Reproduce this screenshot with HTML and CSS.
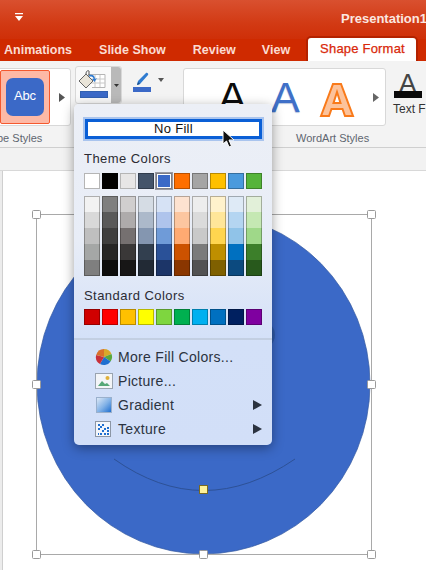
FILE: index.html
```html
<!DOCTYPE html>
<html lang="en">
<head>
<meta charset="utf-8">
<title>Shape Format - Fill menu</title>
<link rel="stylesheet" href="styles.css">
</head>
<body>
<div class="app">
  <header class="titlebar">
    <svg class="qat" width="10" height="9" viewBox="0 0 10 9"><path d="M1 0h8v1.200H1zM1 3h8L5 8z" fill="#fff"/></svg>
    <span class="doc-title">Presentation1</span>
  </header>
  <nav class="tabs">
    <span class="tab">Animations</span>
    <span class="tab">Slide Show</span>
    <span class="tab">Review</span>
    <span class="tab">View</span>
    <span class="tab tab-active">Shape Format</span>
  </nav>
  <section class="ribbon">
    <div class="gallery gallery-shapes">
      <div class="shape-thumb"><span class="abc">Abc</span></div>
      <svg class="more" width="6" height="9" viewBox="0 0 6 9"><path d="M0 0l6 4.500-6 4.500z" fill="#555"/></svg>
    </div>
    <div class="fill-btn">
      <div class="fill-main">
        <svg width="28" height="20" viewBox="0 0 28 20">
          <path d="M10 4.500h17v13H14" fill="#fff" stroke="#b5b5b5"/>
          <path d="M13 9h14M13 13h14M17 5v12M22 5v12" stroke="#c8c8c8" fill="none"/>
          <path d="M1 11l7-7 7 7-7 7z" fill="#e9e4d8" stroke="#666"/>
          <path d="M8 4c0-3 2-4 3-3v5" fill="none" stroke="#555"/>
          <path d="M11 5c3-1 6 0 6 4l2-1-2.500 4-2.500-3 1.500 0c0-2-2-3-4-2z" fill="#2f7bd0"/>
        </svg>
        <span class="fill-bar"></span>
      </div>
      <div class="fill-arrow"><svg width="5" height="3" viewBox="0 0 5 3"><path d="M0 0h5L2.500 3z" fill="#333"/></svg></div>
    </div>
    <div class="pen-btn">
      <svg class="pen" width="18" height="14" viewBox="0 0 18 14"><path d="M2 13l1-4 8-8c1-1 3 1 2 2L5 12z" fill="#2f7bd0"/><path d="M2 13l1-3 2 2z" fill="#1b4f8c"/></svg>
      <svg class="pen-caret" width="6" height="4" viewBox="0 0 6 4"><path d="M0 0h6L3 4z" fill="#555"/></svg>
      <span class="pen-bar"></span>
    </div>
    <div class="gallery gallery-wordart">
      <span class="wa wa-black">A</span>
      <span class="wa wa-blue">A</span>
      <svg class="wa-orange" width="36" height="36" viewBox="0 0 36 36"><path d="M14 2h8l12 32h-8l-2.500-7h-11L10 34H2z" fill="#fcc29a" stroke="#f97a1a" stroke-width="2"/><path d="M18 10l-3.500 11h7z" fill="#fff" stroke="#f97a1a" stroke-width="2"/></svg>
      <svg class="more more-wa" width="6" height="9" viewBox="0 0 6 9"><path d="M0 0l6 4.500-6 4.500z" fill="#666"/></svg>
    </div>
    <div class="text-fill">
      <span class="tf-a">A</span>
      <span class="tf-bar"></span>
      <span class="tf-label">Text Fill</span>
    </div>
    <span class="group-label label-shapes">pe Styles</span>
    <span class="group-label label-wordart">WordArt Styles</span>
  </section>
  <div class="strip"></div>
  <main class="stage">
    <div class="slide"></div>
    <svg class="canvas" width="426" height="399" viewBox="0 171 426 399">
      <ellipse cx="203.500" cy="384" rx="166.500" ry="170" fill="#3b69c7" stroke="#34599f" stroke-width="0.700"/>
      <circle cx="261" cy="335" r="14" fill="#2f5aa8"/>
      <path d="M114 459Q203 522 295 459" fill="none" stroke="#2d5196" stroke-width="1"/>
      <rect class="box" x="36.500" y="214.500" width="335" height="340"/>
      <rect class="h" x="32.500" y="210.500" width="8" height="8"/>
      <rect class="h" x="199.500" y="210.500" width="8" height="8"/>
      <rect class="h" x="367.500" y="210.500" width="8" height="8"/>
      <rect class="h" x="32.500" y="380.500" width="8" height="8"/>
      <rect class="h" x="367.500" y="380.500" width="8" height="8"/>
      <rect class="h" x="32.500" y="550.500" width="8" height="8"/>
      <rect class="h" x="199.500" y="550.500" width="8" height="8"/>
      <rect class="h" x="367.500" y="550.500" width="8" height="8"/>
      <rect class="h-y" x="199.500" y="485.500" width="8" height="8"/>
    </svg>
  </main>

  <div class="menu">
    <div class="no-fill">No Fill</div>
    <div class="menu-head">Theme Colors</div>
    <div class="row theme">
      <span class="sw"></span><span class="sw"></span><span class="sw"></span><span class="sw"></span><span class="sw sw-on"></span><span class="sw"></span><span class="sw"></span><span class="sw"></span><span class="sw"></span><span class="sw"></span>
    </div>
    <div class="row shades">
      <div class="col"><i></i><i></i><i></i><i></i><i></i></div>
      <div class="col"><i></i><i></i><i></i><i></i><i></i></div>
      <div class="col"><i></i><i></i><i></i><i></i><i></i></div>
      <div class="col"><i></i><i></i><i></i><i></i><i></i></div>
      <div class="col"><i></i><i></i><i></i><i></i><i></i></div>
      <div class="col"><i></i><i></i><i></i><i></i><i></i></div>
      <div class="col"><i></i><i></i><i></i><i></i><i></i></div>
      <div class="col"><i></i><i></i><i></i><i></i><i></i></div>
      <div class="col"><i></i><i></i><i></i><i></i><i></i></div>
      <div class="col"><i></i><i></i><i></i><i></i><i></i></div>
    </div>
    <div class="menu-head head-std">Standard Colors</div>
    <div class="row standard">
      <span class="sw"></span><span class="sw"></span><span class="sw"></span><span class="sw"></span><span class="sw"></span><span class="sw"></span><span class="sw"></span><span class="sw"></span><span class="sw"></span><span class="sw"></span>
    </div>
    <div class="divider"></div>
    <div class="item">
      <svg class="ico" width="18" height="18" viewBox="0 0 18 18">
        <path d="M9 9V1a8 8 0 0 1 7.500 5z" fill="#d8a82a"/>
        <path d="M9 9l7.500-3a8 8 0 0 1-.9 7.500z" fill="#5aa83c"/>
        <path d="M9 9l6.600 4.500A8 8 0 0 1 5 16z" fill="#1f6fd0"/>
        <path d="M9 9l-4 7A8 8 0 0 1 1.200 7z" fill="#c8303a"/>
        <path d="M9 9L1.200 7A8 8 0 0 1 9 1z" fill="#d8702a"/>
      </svg>
      <span>More Fill Colors...</span>
    </div>
    <div class="item">
      <svg class="ico" width="18" height="16" viewBox="0 0 18 16">
        <rect x=".5" y=".5" width="17" height="15" fill="#f3f5f8" stroke="#9aa4b0"/>
        <circle cx="12.500" cy="5" r="2" fill="#e0b03a"/>
        <path d="M3 13l4-5 3 3 2-1 3 3z" fill="#56a878"/>
      </svg>
      <span>Picture...</span>
    </div>
    <div class="item">
      <span class="ico grad"></span>
      <span>Gradient</span>
      <svg class="sub" width="9" height="10" viewBox="0 0 9 10"><path d="M0 0l9 5-9 5z" fill="#2b3340"/></svg>
    </div>
    <div class="item">
      <svg class="ico" width="16" height="16" viewBox="0 0 16 16">
        <rect x=".5" y=".5" width="15" height="15" fill="#f3f6fb" stroke="#8c96a5"/>
        <path d="M3 3h2v2H3zM7 3h2v2H7zM5 5h2v2H5zM3 7h2v2H3zM9 7h2v2H9zM12 6h2v2h-2zM7 9h2v2H7zM12 9h2v2h-2zM9 12h2v2H9zM5 12h2v2H5zM12 12h2v2h-2zM3 12h1v2H3z" fill="#1f6fd0"/>
      </svg>
      <span>Texture</span>
      <svg class="sub" width="9" height="10" viewBox="0 0 9 10"><path d="M0 0l9 5-9 5z" fill="#2b3340"/></svg>
    </div>
  </div>

  <svg class="cursor" width="14" height="20" viewBox="0 0 14 20"><path d="M1 1v14l3.500-3 2.500 6 2.500-1-2.500-6h5z" fill="#111" stroke="#fff" stroke-width="1"/></svg>
</div>
</body>
</html>
```
FILE: styles.css
```css
* { box-sizing: border-box; }
html, body { margin: 0; padding: 0; }
body { width: 426px; height: 570px; overflow: hidden; font-family: "Liberation Sans", Arial, sans-serif; background: #fff; }
.app { position: relative; width: 426px; height: 570px; overflow: hidden; display: flex; flex-direction: column; }

.titlebar { height: 39px; flex: none; display: flex; align-items: center; justify-content: space-between; padding: 0 0 3px 14px; background: linear-gradient(#d9502f, #d23a14 60%, #cf2f08); }
.qat { display: block; margin-bottom: 1px; }
.doc-title { font-size: 13px; font-weight: 700; color: #fbe7e0; white-space: nowrap; width: 85px; }

.tabs { height: 22px; flex: none; display: flex; align-items: flex-end; background: #cf2a00; padding-left: 4px; font-size: 12.5px; font-weight: 700; color: #fbdcd2; }
.tab { height: 22px; line-height: 22px; margin-right: 27px; white-space: nowrap; }
.tab:nth-child(3) { margin-right: 26px; }
.tab-active { height: 23px; margin: 0 0 0 -9px; padding: 0 0 0 12px; width: 108px; background: #fff; color: #d9280a; border-radius: 3px 3px 0 0; box-shadow: 0 0 0 2px #b32200; clip-path: inset(-2px -2px 0 -2px); font-size: 13px; font-weight: 400; letter-spacing: .2px; -webkit-text-stroke: .25px #d9280a; }

.ribbon { position: relative; height: 87px; flex: none; display: flex; align-items: flex-start; padding-top: 6px; background: #f3f3f3; border-bottom: 1px solid #cfcfcf; }
.ribbon > * { flex: none; }
.gallery { background: #fff; border: 1px solid #d8d8d8; border-radius: 3px; height: 58px; display: flex; align-items: center; }
.gallery-shapes { width: 77px; margin-left: -6px; padding-left: 5px; margin-top: 1px; }
.shape-thumb { width: 50px; height: 54px; background: #fdb9a6; border: 1px solid #f4592f; border-radius: 2px; display: flex; align-items: center; justify-content: center; }
.abc { width: 38px; height: 38px; background: #3b69c7; border-radius: 7px; color: #fff; font-size: 13px; line-height: 36px; text-align: center; letter-spacing: -.2px; }
.more { margin-left: 9px; }

.fill-btn { width: 47px; height: 38px; margin: -1px 0 0 4px; display: flex; border: 1px solid #d8d8d8; border-radius: 3px; background: #f9f9f9; }
.fill-main { flex: 1; display: flex; flex-direction: column; align-items: center; padding-top: 3px; }
.fill-main svg { margin-left: -3px; }
.fill-bar { width: 28px; height: 7px; background: #3b69c7; margin-top: 1px; border: 1px solid #3160b0; }
.fill-arrow { width: 10px; background: #b9b9b9; display: flex; align-items: center; justify-content: center; border-radius: 0 3px 3px 0; }

.pen-btn { position: relative; width: 40px; height: 40px; margin: 2px 0 0 11px; }
.pen { position: absolute; left: 2px; top: 3px; }
.pen-caret { position: absolute; left: 25px; top: 9px; }
.pen-bar { position: absolute; left: 0; top: 18px; width: 18px; height: 5px; background: #3b69c7; }
.pen-btn::after { content: ""; position: absolute; left: 4px; top: 35px; width: 12px; height: 2px; background: #b5b5b5; }

.gallery-wordart { position: relative; width: 203px; margin: 1px 0 0 10px; overflow: hidden; }
.wa { position: absolute; top: -3px; font-size: 43px; line-height: 62px; }
.wa-black { left: 34px; color: #0c0c0c; }
.wa-blue { left: 87px; color: #3f70c8; text-shadow: 0 1px 1px #b8c6de; }
.wa-orange { position: absolute; left: 135px; top: 13px; }
.more-wa { position: absolute; left: 189px; top: 24px; margin: 0; }

.text-fill { position: relative; width: 40px; height: 56px; margin-left: 7px; }
.tf-a { position: absolute; left: 6px; top: 1px; font-size: 26px; line-height: 30px; color: #444; }
.tf-bar { position: absolute; left: 1px; top: 24px; width: 28px; height: 7px; background: #0a0a0a; }
.tf-label { position: absolute; left: 0; top: 35px; font-size: 12px; line-height: 14px; color: #333; white-space: nowrap; }

.group-label { position: absolute; top: 71px; font-size: 11px; line-height: 13px; color: #5f6670; white-space: nowrap; }
.label-shapes { left: -3px; }
.label-wordart { left: 296px; }

.strip { height: 23px; flex: none; background: #f2f2f2; border-bottom: 1px solid #d8d8d8; }

.stage { position: relative; flex: 1; background: #ececec; padding-left: 2px; }
.slide { height: 100%; background: #fff; border-left: 1px solid #cfcfcf; }
.canvas { position: absolute; left: 0; top: 0; }
.box { fill: none; stroke: #a9a9a9; stroke-width: 1; }
.h { fill: #fff; stroke: #9a9a9a; stroke-width: 1; rx: 1; }
.h-y { fill: #fdf19a; stroke: #7a6a20; stroke-width: 1; }

.menu { position: absolute; left: 74px; top: 104px; width: 198px; height: 341px; padding: 15px 10px 0; border-radius: 5px; background: linear-gradient(#eceff6, #e8edf7 40%, #d3e0f8 70%, #d2dff8); box-shadow: 0 3px 12px rgba(0, 0, 0, .38); }
.no-fill { width: 177px; height: 20px; margin-left: 1px; background: #fff; border: 3px solid #0a5fd6; box-shadow: 0 0 0 2px #a9c4ee; font-size: 13px; line-height: 14px; text-align: center; color: #111; letter-spacing: .3px; }
.menu-head { margin-top: 12px; font-size: 13px; line-height: 15px; color: #2b2b33; letter-spacing: .45px; }
.head-std { margin-top: 12px; }
.row { display: flex; gap: 2px; }
.theme { margin-top: 7px; }
.shades { margin-top: 7px; }
.standard { margin-top: 6px; }
.sw { width: 16px; height: 16px; border: 1px solid rgba(0, 0, 0, .28); }
.theme .sw:nth-child(1) { background: #fff; border-color: #b5b5b5; }
.theme .sw:nth-child(2) { background: #000; }
.theme .sw:nth-child(3) { background: #e7e6e6; border-color: #b5b5b5; }
.theme .sw:nth-child(4) { background: #44546a; }
.theme .sw:nth-child(5) { background: #3b69c7; }
.theme .sw:nth-child(6) { background: #ff6f00; }
.theme .sw:nth-child(7) { background: #a5a5a5; }
.theme .sw:nth-child(8) { background: #ffc000; }
.theme .sw:nth-child(9) { background: #4a9add; }
.theme .sw:nth-child(10) { background: #56b43a; }
.theme .sw-on { outline: 1px solid #9a9aa2; box-shadow: inset 0 0 0 1px #fff; border-color: #7d7d85; }
.standard .sw:nth-child(1) { background: #d00000; }
.standard .sw:nth-child(2) { background: #ff0000; }
.standard .sw:nth-child(3) { background: #ffc000; }
.standard .sw:nth-child(4) { background: #ffff00; }
.standard .sw:nth-child(5) { background: #7ed63f; }
.standard .sw:nth-child(6) { background: #00b050; }
.standard .sw:nth-child(7) { background: #00b0f0; }
.standard .sw:nth-child(8) { background: #0070c0; }
.standard .sw:nth-child(9) { background: #002060; }
.standard .sw:nth-child(10) { background: #7f00a0; }

.col { width: 16px; height: 80px; display: flex; flex-direction: column; position: relative; }
.col::after { content: ""; position: absolute; inset: 0; border: 1px solid rgba(0, 0, 0, .28); }
.col i { display: block; height: 16px; }
.col:nth-child(1) i:nth-child(1) { background: #f2f2f2; } .col:nth-child(1) i:nth-child(2) { background: #d9d9d9; } .col:nth-child(1) i:nth-child(3) { background: #bfbfbf; } .col:nth-child(1) i:nth-child(4) { background: #a5a7a6; } .col:nth-child(1) i:nth-child(5) { background: #7f7f7f; }
.col:nth-child(2) i:nth-child(1) { background: #7f7f7f; } .col:nth-child(2) i:nth-child(2) { background: #595959; } .col:nth-child(2) i:nth-child(3) { background: #3f3f3f; } .col:nth-child(2) i:nth-child(4) { background: #262626; } .col:nth-child(2) i:nth-child(5) { background: #0d0d0d; }
.col:nth-child(3) i:nth-child(1) { background: #d0cece; } .col:nth-child(3) i:nth-child(2) { background: #aeabab; } .col:nth-child(3) i:nth-child(3) { background: #757070; } .col:nth-child(3) i:nth-child(4) { background: #3a3838; } .col:nth-child(3) i:nth-child(5) { background: #171616; }
.col:nth-child(4) i:nth-child(1) { background: #d5dce4; } .col:nth-child(4) i:nth-child(2) { background: #acb9ca; } .col:nth-child(4) i:nth-child(3) { background: #8496b0; } .col:nth-child(4) i:nth-child(4) { background: #323f4f; } .col:nth-child(4) i:nth-child(5) { background: #222a35; }
.col:nth-child(5) i:nth-child(1) { background: #d6e2f5; } .col:nth-child(5) i:nth-child(2) { background: #afc4ec; } .col:nth-child(5) i:nth-child(3) { background: #6f9bd8; } .col:nth-child(5) i:nth-child(4) { background: #2a5198; } .col:nth-child(5) i:nth-child(5) { background: #1c3568; }
.col:nth-child(6) i:nth-child(1) { background: #fde2d0; } .col:nth-child(6) i:nth-child(2) { background: #fcc6a0; } .col:nth-child(6) i:nth-child(3) { background: #ffaa72; } .col:nth-child(6) i:nth-child(4) { background: #cc5200; } .col:nth-child(6) i:nth-child(5) { background: #8a3600; }
.col:nth-child(7) i:nth-child(1) { background: #ededed; } .col:nth-child(7) i:nth-child(2) { background: #dbdbdb; } .col:nth-child(7) i:nth-child(3) { background: #c9c9c9; } .col:nth-child(7) i:nth-child(4) { background: #7b7b7b; } .col:nth-child(7) i:nth-child(5) { background: #525252; }
.col:nth-child(8) i:nth-child(1) { background: #fff2cc; } .col:nth-child(8) i:nth-child(2) { background: #ffe699; } .col:nth-child(8) i:nth-child(3) { background: #ffd54f; } .col:nth-child(8) i:nth-child(4) { background: #bf8f00; } .col:nth-child(8) i:nth-child(5) { background: #7f6000; }
.col:nth-child(9) i:nth-child(1) { background: #deeaf6; } .col:nth-child(9) i:nth-child(2) { background: #b4d5f1; } .col:nth-child(9) i:nth-child(3) { background: #90c3e8; } .col:nth-child(9) i:nth-child(4) { background: #0070c0; } .col:nth-child(9) i:nth-child(5) { background: #0c4a7f; }
.col:nth-child(10) i:nth-child(1) { background: #e2f0d9; } .col:nth-child(10) i:nth-child(2) { background: #c5e8b3; } .col:nth-child(10) i:nth-child(3) { background: #9fd889; } .col:nth-child(10) i:nth-child(4) { background: #3c7f2a; } .col:nth-child(10) i:nth-child(5) { background: #28591c; }

.divider { height: 2px; margin: 13px -10px 5px; background: #c3cfe2; }
.item { position: relative; height: 24px; display: flex; align-items: center; padding-left: 34px; font-size: 14px; color: #2b3340; letter-spacing: .3px; white-space: nowrap; }
.ico { position: absolute; left: 11px; top: 50%; transform: translateY(-50%); }
.grad { display: block; width: 16px; height: 16px; left: 12px; background: linear-gradient(135deg, #dce8f6, #7fb0e6 55%, #1f6fd0); border: 1px solid #9ab0cc; }
.sub { position: absolute; left: 169px; top: 7px; }

.cursor { position: absolute; left: 222px; top: 129px; }
```
